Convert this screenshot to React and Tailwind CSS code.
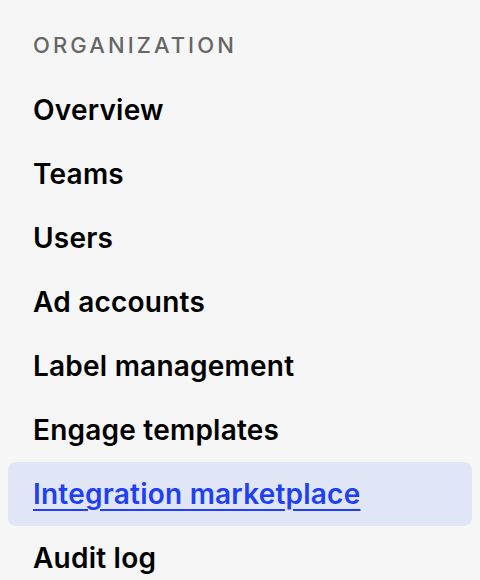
const items = [
  'Overview',
  'Teams',
  'Users',
  'Ad accounts',
  'Label management',
  'Engage templates',
  'Integration marketplace',
  'Audit log',
];

const ACTIVE = 'Integration marketplace';

export default function App() {
  return (
    <div className="min-h-screen w-[480px] bg-[#f6f6f6] px-2 pt-[29px] font-['Inter','Noto_Sans',sans-serif]">
      <div className="px-[25px] text-[22px] leading-[32px] font-medium uppercase tracking-[0.14em] text-[#666666]">
        Organization
      </div>
      <nav className="mt-[17px] flex flex-col">
        {items.map((item) => {
          const active = item === ACTIVE;
          return (
            <a
              key={item}
              href="#"
              className={`flex h-16 items-center rounded-lg px-[25px] text-[28px] font-semibold tracking-[0.008em] ${
                active
                  ? 'bg-[#e0e6f6] text-[#1f3ff5] underline underline-offset-[5px] decoration-2'
                  : 'text-black no-underline'
              }`}
            >
              {item}
            </a>
          );
        })}
      </nav>
    </div>
  );
}
